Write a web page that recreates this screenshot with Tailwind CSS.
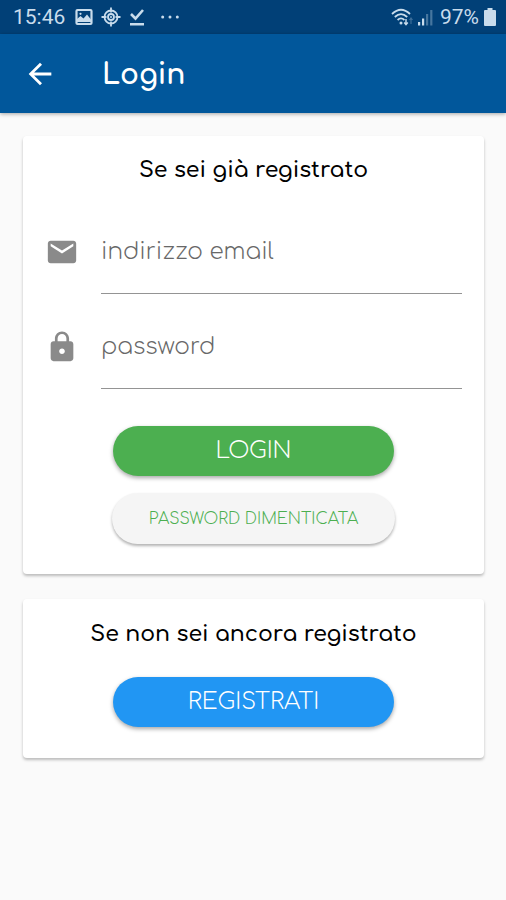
<!DOCTYPE html>
<html lang="it">
<head>
<meta charset="utf-8">
<meta name="viewport" content="width=device-width, initial-scale=1">
<title>Login</title>
<script src="https://cdn.jsdelivr.net/npm/@tailwindcss/browser@4"></script>
</head>
<body class="min-h-screen bg-[#fafafa] font-[Comfortaa,Inter,sans-serif] text-black">
  <div class="flex h-[34px] items-center justify-between bg-[#014077] pr-[10px] pl-[13px] font-[Roboto,sans-serif] text-[21px] leading-6 text-[#c9dcec]">
    <div class="flex items-center">
      <span>15:46</span>
      <svg class="ml-[10px] size-[18px]" viewBox="0 0 18 18" fill="none" stroke="currentColor" stroke-width="2.200" aria-hidden="true"><rect x="1.500" y="2" width="15" height="14" rx="1"/><path d="M2 14v-3l3.500-3 3 2.500 3.500-4 4 5V14z" fill="currentColor" stroke="none"/><circle cx="5.500" cy="5.800" r="1.100" fill="currentColor" stroke="none"/></svg>
      <svg class="ml-[8px] size-[20px]" viewBox="0 0 20 20" fill="none" stroke="currentColor" stroke-width="1.800" aria-hidden="true"><circle cx="10" cy="10" r="6.500"/><circle cx="10" cy="10" r="3"/><path d="M10 .5v5M10 14.500v5M.5 10h5M14.500 10h5"/><circle cx="10" cy="10" r="1" fill="currentColor" stroke="none"/></svg>
      <svg class="ml-[8px] h-[18px] w-[16px]" viewBox="0 0 16 18" fill="none" stroke="currentColor" stroke-width="2.600" aria-hidden="true"><path d="M2 6l4.500 4.500L14 2M1 16.200h14"/></svg>
      <svg class="ml-[16px] h-[4px] w-[18px]" viewBox="0 0 18 4" fill="currentColor" aria-hidden="true"><circle cx="1.700" cy="2" r="1.500"/><circle cx="9" cy="2" r="1.500"/><circle cx="16.300" cy="2" r="1.500"/></svg>
    </div>
    <div class="flex items-center">
      <svg class="h-[18px] w-[23px]" viewBox="0 0 23 18" fill="none" stroke="currentColor" stroke-width="1.800" aria-hidden="true"><path d="M1 6Q10 -2.500 19 6M3.800 9Q10 3.200 16.200 9M6.600 12Q10 8.800 13.400 12"/><circle cx="10" cy="15" r="1.500" fill="currentColor" stroke="none"/><path d="M15 11v6M13.200 14.500l1.800 2.200 1.800-2.200" stroke-width="1.400"/><path d="M20 16v-6M18.500 12l1.500-2 1.500 2" stroke-width="1.200" opacity=".3"/></svg>
      <svg class="ml-[3px] h-[17px] w-[17px]" viewBox="0 0 17 17" fill="currentColor" aria-hidden="true"><path d="M1 13h2.200v3.500H1zM5 9.500h2.200v7H5z"/><path d="M9 5h2.200v11.500H9zM13.200 1h2.200v15.500h-2.200z" opacity=".35"/></svg>
      <span class="ml-[6px]">97%</span>
      <svg class="ml-[5px] h-[18px] w-[12px]" viewBox="0 0 12 18" fill="currentColor" aria-hidden="true"><path d="M3.500 0h5v2H11a1 1 0 0 1 1 1v14a1 1 0 0 1-1 1H1a1 1 0 0 1-1-1V3a1 1 0 0 1 1-1h2.500z"/></svg>
    </div>
  </div>

  <header class="flex h-[79px] items-center bg-[#01579b] px-[23px] text-white shadow-[0_1px_4px_rgba(0,0,0,0.35)]">
    <a href="#" aria-label="Indietro" class="block size-[34px]">
      <svg class="size-[34px]" viewBox="0 0 24 24" fill="currentColor" aria-hidden="true"><path d="M20 11H7.830l5.590-5.590L12 4l-8 8 8 8 1.410-1.410L7.830 13H20v-2z"/></svg>
    </a>
    <h1 class="ml-[45px] pt-[2px] text-[28px] leading-8 font-bold">Login</h1>
  </header>

  <main class="flex flex-col gap-[25px] pt-[23px] pr-[22px] pl-[23px]">
    <form class="flex flex-col items-center rounded-[4px] bg-white px-[22px] pt-[18px] pb-[30px] shadow-[0_2px_3px_rgba(0,0,0,0.25)]">
      <h2 class="text-center text-[22px] leading-8 font-semibold">Se sei già registrato</h2>
      <div class="mt-[24px] flex w-full flex-col gap-[11px]">
        <div class="flex items-center gap-[22px]">
          <label for="email" aria-label="indirizzo email" class="text-[#8a8a8a]">
            <svg class="size-[34px]" viewBox="0 0 24 24" fill="currentColor" aria-hidden="true"><path d="M20 4H4c-1.100 0-1.990.9-1.990 2L2 18c0 1.100.9 2 2 2h16c1.100 0 2-.9 2-2V6c0-1.100-.9-2-2-2zm0 4l-8 5-8-5V6l8 5 8-5v2z"/></svg>
          </label>
          <input id="email" type="email" placeholder="indirizzo email" class="h-[84px] min-w-0 flex-1 border-b border-[#949494] text-[23px] leading-8 font-light outline-none placeholder:text-[#686868]">
        </div>
        <div class="flex items-center gap-[22px]">
          <label for="password" aria-label="password" class="text-[#8a8a8a]">
            <svg class="size-[34px]" viewBox="0 0 24 24" fill="currentColor" aria-hidden="true"><path d="M18 8h-1V6c0-2.760-2.240-5-5-5S7 3.240 7 6v2H6c-1.100 0-2 .9-2 2v10c0 1.100.9 2 2 2h12c1.100 0 2-.9 2-2V10c0-1.100-.9-2-2-2zm-6 9c-1.100 0-2-.9-2-2s.9-2 2-2 2 .9 2 2-.9 2-2 2zm3.100-9H8.900V6c0-1.710 1.390-3.100 3.100-3.100s3.100 1.390 3.100 3.100v2z"/></svg>
          </label>
          <input id="password" type="password" placeholder="password" class="h-[84px] min-w-0 flex-1 border-b border-[#949494] text-[23px] leading-8 font-light outline-none placeholder:text-[#686868]">
        </div>
      </div>
      <button type="submit" class="mt-[37px] h-[50px] w-[281px] rounded-full bg-[#4caf50] text-[23px] leading-8 font-light text-white shadow-[0_2px_4px_rgba(0,0,0,0.35)]">LOGIN</button>
      <button type="button" class="mt-[17px] h-[51px] w-[283px] rounded-full bg-[#f5f5f5] text-[16px] leading-6 font-light text-[#4caf50] shadow-[0_2px_3px_rgba(0,0,0,0.3)]">PASSWORD DIMENTICATA</button>
    </form>

    <section class="flex flex-col items-center rounded-[4px] bg-white px-[22px] pt-[19px] pb-[31px] shadow-[0_2px_3px_rgba(0,0,0,0.25)]">
      <h2 class="text-center text-[22px] leading-8 font-semibold">Se non sei ancora registrato</h2>
      <button type="button" class="mt-[27px] h-[50px] w-[281px] rounded-full bg-[#2196f3] text-[23px] leading-8 font-light text-white shadow-[0_2px_4px_rgba(0,0,0,0.35)]">REGISTRATI</button>
    </section>
  </main>
</body>
</html>
